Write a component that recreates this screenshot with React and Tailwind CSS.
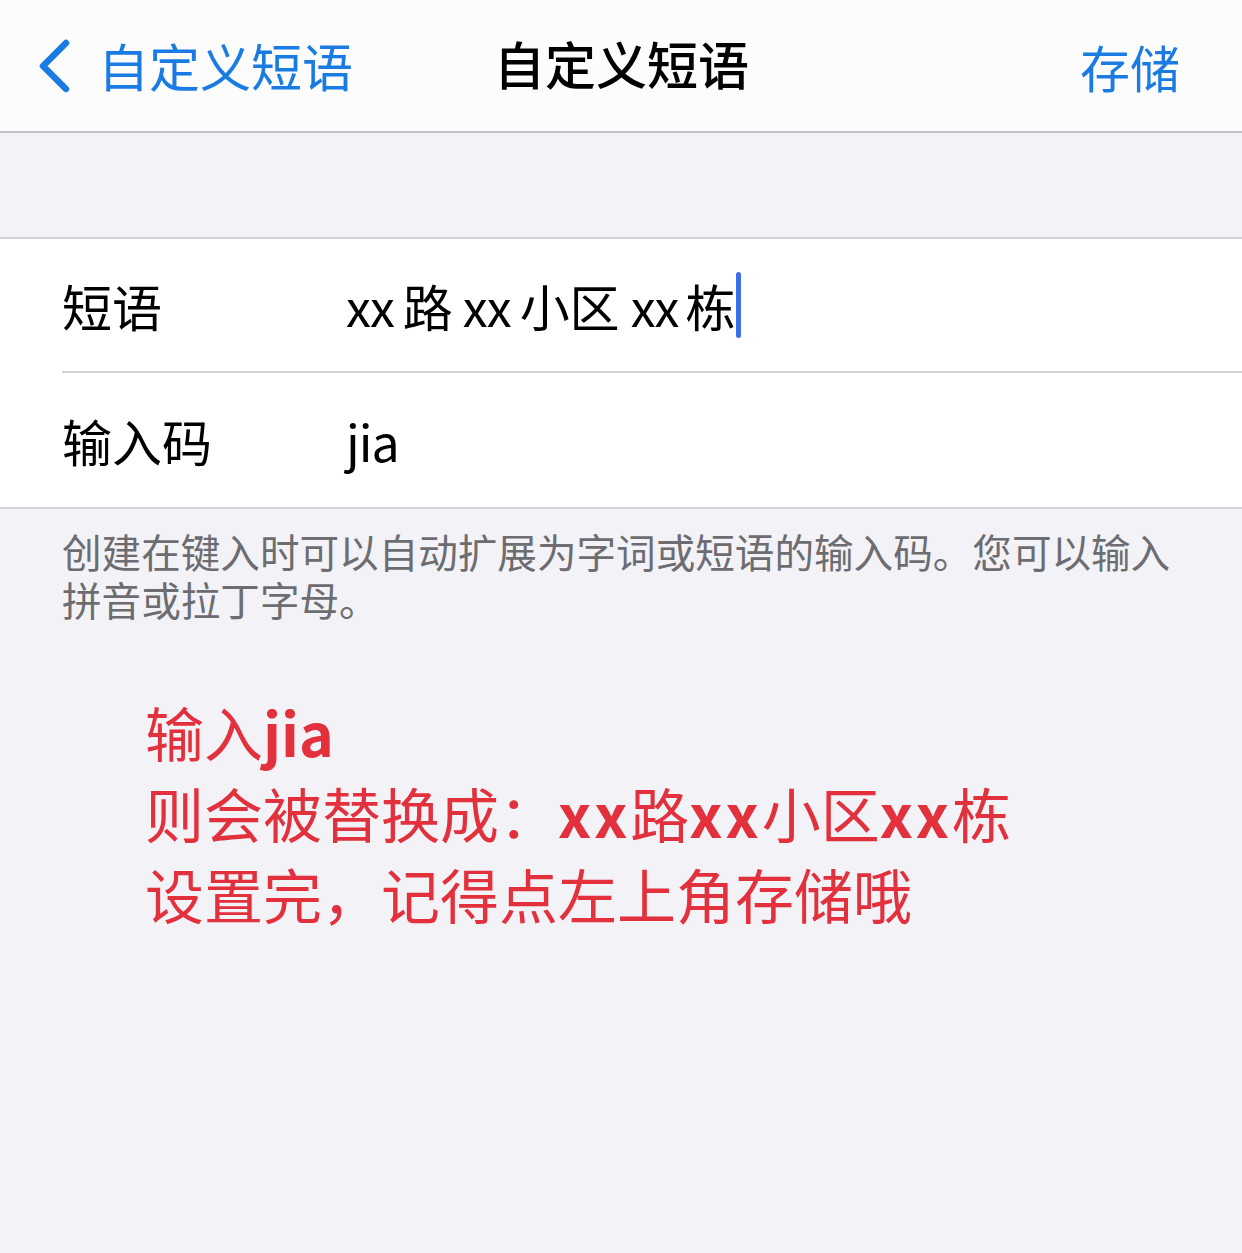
import React from "react";

const font = { fontFamily: '"Noto Sans CJK SC", "Noto Sans", sans-serif' };

function BackChevron() {
  return (
    <svg width="36" height="56" viewBox="0 0 36 56" className="shrink-0">
      <path
        d="M30 5 L7 28 L30 51"
        fill="none"
        stroke="#1a7be3"
        strokeWidth="6.5"
        strokeLinecap="round"
        strokeLinejoin="round"
      />
    </svg>
  );
}

function Row({ label, children, last }) {
  return (
    <div className="flex h-[134px] items-center pl-[62px]">
      <div
        className={`flex h-full flex-1 items-center ${
          last ? "" : "border-b-2 border-[#d3d3d6]"
        }`}
      >
        <div className="w-[284px] shrink-0 text-[50px] leading-none text-black">
          {label}
        </div>
        <div className="flex items-center text-[50px] leading-none text-black">
          {children}
        </div>
      </div>
    </div>
  );
}

export default function App() {
  return (
    <div
      className="flex h-[1253px] w-[1242px] flex-col overflow-hidden bg-[#f2f2f7]"
      style={font}
    >
      {/* navigation bar */}
      <div className="relative flex h-[133px] shrink-0 items-center border-b-2 border-[#c4c4c7] bg-[#fcfcfd]">
        <div className="flex items-center gap-[26px] pl-[36px] text-[#1a7be3]">
          <BackChevron />
          <span className="text-[51px] leading-none">自定义短语</span>
        </div>
        <div className="absolute left-[494px] top-[38px] text-[51px] font-medium leading-none text-black">
          自定义短语
        </div>
        <div className="ml-auto pr-[62px] text-[50px] leading-none text-[#1a7be3]">
          存储
        </div>
      </div>

      <div className="h-[104px] shrink-0" />

      {/* phrase form */}
      <div className="border-y-2 border-[#d3d3d6] bg-white">
        <Row label="短语">
          <span className="tracking-[-1px]">xx</span>
          <span className="ml-[9px]">路</span>
          <span className="ml-[10px] tracking-[-1px]">xx</span>
          <span className="ml-[9px]">小区</span>
          <span className="ml-[11px] tracking-[-1px]">xx</span>
          <span className="ml-[7px]">栋</span>
          <span className="ml-[1px] h-[66px] w-[5px] rounded-full bg-[#3b6ee6]" />
        </Row>
        <Row label="输入码" last>
          <span className="tracking-[-1px]">jia</span>
        </Row>
      </div>

      <p className="px-[62px] pt-[18px] text-[39.6px] leading-[48px] text-[#6c6c71]">
        创建在键入时可以自动扩展为字词或短语的输入码。您可以输入拼音或拉丁字母。
      </p>

      {/* note */}
      <div className="pl-[145px] pt-[68px] text-[59px] leading-[81px] text-[#e2303c]">
        <div>
          输入<span className="font-bold">jia</span>
        </div>
        <div>
          则会被替换成：<span className="font-bold tracking-[3px]">xx</span>路
          <span className="font-bold tracking-[3px]">xx</span>小区
          <span className="font-bold tracking-[3px]">xx</span>栋
        </div>
        <div>设置完，记得点左上角存储哦</div>
      </div>
    </div>
  );
}
